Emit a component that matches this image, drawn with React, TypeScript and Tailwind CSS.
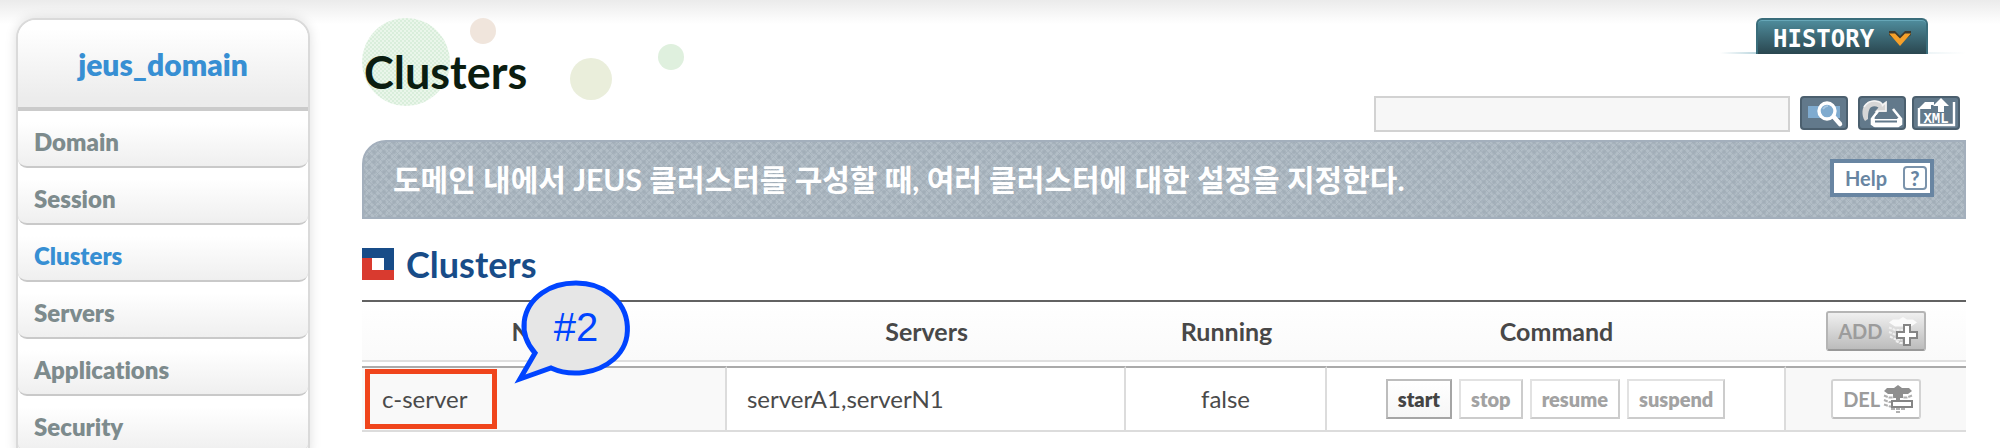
import React from "react";

const menu = ["Domain", "Session", "Clusters", "Servers", "Applications", "Security"];

const commands = [
  { label: "start", active: true },
  { label: "stop", active: false },
  { label: "resume", active: false },
  { label: "suspend", active: false },
];

function Sidebar() {
  return (
    <nav
      aria-label="Main"
      className="w-[294px] shrink-0 self-start overflow-hidden rounded-t-[20px] border-2 border-[#dadada] bg-white shadow-[0_0_12px_rgba(0,0,0,0.13)]"
    >
      <div className="flex h-[91px] items-center justify-center border-b-4 border-[#cbcbcb] bg-linear-to-b from-white from-10% to-[#ececec] to-90%">
        <a href="#domain" className="text-[30px] leading-none font-extrabold text-[#378fd3]">
          jeus_domain
        </a>
      </div>
      <ul>
        {menu.map((item) => (
          <li key={item}>
            <a
              href={"#" + item.toLowerCase()}
              className={
                "flex h-[57px] items-center rounded-b-[9px] border-b-2 border-[#c9c9c9] bg-linear-to-b from-white from-20% to-[#efefef] px-4 pt-1.5 text-[24px] leading-none font-extrabold " +
                (item === "Clusters" ? "text-[#378fd3]" : "text-[#7d8b8d]")
              }
            >
              {item}
            </a>
          </li>
        ))}
      </ul>
    </nav>
  );
}

function TitleDots() {
  return (
    <svg className="absolute top-0 left-0 h-[88px] w-[322px]" viewBox="0 0 322 88" aria-hidden="true">
      <defs>
        <pattern id="weave" width="4" height="4" patternUnits="userSpaceOnUse">
          <rect width="4" height="4" fill="#eaf6ea" />
          <rect width="2" height="2" fill="#d9eedb" />
          <rect x="2" y="2" width="2" height="2" fill="#d9eedb" />
        </pattern>
      </defs>
      <circle cx="44" cy="44" r="44" fill="url(#weave)" />
      <circle cx="121" cy="13" r="13" fill="#f0e5dc" />
      <circle cx="229" cy="61" r="21" fill="#eaeedb" />
      <circle cx="309" cy="39" r="13" fill="#dff0de" />
    </svg>
  );
}

function ToolButton({ label, children }: { label: string; children: React.ReactNode }) {
  return (
    <button
      type="button"
      aria-label={label}
      className="h-[34px] w-12 rounded-[4px] border-2 border-[#4b5f6e] bg-[#62798b]"
    >
      <svg viewBox="0 0 44 30" className="h-[30px] w-11" aria-hidden="true">
        {children}
      </svg>
    </button>
  );
}

function SearchRow() {
  return (
    <div className="flex items-start pr-1.5">
      <input
        type="text"
        aria-label="Search"
        className="mr-2.5 h-9 w-[416px] border-2 border-[#d2d2d2] bg-[#f7f7f7] px-2 text-[20px] outline-none"
      />
      <div className="mr-2.5 flex">
        <ToolButton label="Search">
          <rect x="6" y="8" width="32" height="12" fill="#7fabcf" />
          <path d="M31 18l7 8" stroke="#fff" strokeWidth="4.5" strokeLinecap="round" />
          <circle cx="25" cy="13" r="8" fill="#7fabcf" stroke="#fff" strokeWidth="3.4" />
          <path d="M21 11q2-3 5-3" fill="none" stroke="#a9c8e2" strokeWidth="1.6" />
        </ToolButton>
      </div>
      <div className="flex gap-1.5">
        <ToolButton label="Refresh">
          <path
            d="M5 23C1 17 2 9 6 5.500C11 1.500 18 1.500 22 6l4.500-3v11H14.500l4-4.500C15 7.500 11 8 9.500 11C8 14 8 18 8 21z"
            fill="#d6d6d6"
          />
          <path d="M4 9Q8 2.500 15 3t7.500 4.500L26 4.500V13h-9" fill="none" stroke="#f4f4f4" strokeWidth="1.600" />
          <path d="M18 13l-6 8v5l3 2h23l3-2v-5l-8-10" fill="none" stroke="#fff" strokeWidth="2.600" />
          <path d="M11 20h30v5l-3 4H14l-3-4z" fill="#fff" />
          <path d="M17 18h18l1 2H16zM15 23.500h22" fill="#62798b" stroke="#62798b" strokeWidth="2" />
        </ToolButton>
        <ToolButton label="Export XML">
          <path d="M5 10v17h35V4" fill="none" stroke="#fff" strokeWidth="2.400" />
          <path d="M4 11l7-7h9v3h-3v4H4z" fill="#fff" />
          <path d="M27 0l8 8h-5v6h-6V8h-5z" fill="#fff" />
          <text x="22" y="25" textAnchor="middle" fontFamily="Liberation Mono, monospace" fontWeight="700" fontSize="14" fill="#fff">
            XML
          </text>
        </ToolButton>
      </div>
    </div>
  );
}

function PageHeader() {
  return (
    <header className="flex h-[122px] justify-between">
      <div className="relative">
        <TitleDots />
        <h1 className="relative pt-7 pl-0.5 text-[45px] leading-[52px] font-bold text-[#0b1d10]">Clusters</h1>
      </div>
      <div className="flex flex-col items-end justify-between pb-2">
        <div className="flex w-[246px] flex-col items-end">
          <button
            type="button"
            className="z-10 mr-[38px] flex h-9 w-[172px] items-center rounded-t-[6px] border-2 border-b-0 border-[#3a6d7b] bg-linear-to-b from-[#4f8d9d] to-[#2a4750] pt-1 pl-[15px] shadow-[inset_0_1px_0_#67a7b8]"
          >
            <span className="font-['DejaVu_Sans_Mono',monospace] text-[24px] leading-none font-bold text-white">HISTORY</span>
            <svg viewBox="0 0 24 16" className="ml-3.5 h-4 w-6" aria-hidden="true">
              <path d="M1 0h6l5 5 5-5h6v4L12 13 1 4z" fill="#3b3a30" />
              <path d="M1 2.500h6l5 5 5-5h6L12 15z" fill="#f5a02a" />
            </svg>
          </button>
          <div className="-mt-0.5 h-0.5 w-full bg-linear-to-r from-transparent via-[#a5c9d4] via-20% to-transparent" />
        </div>
        <SearchRow />
      </div>
    </header>
  );
}

function Banner() {
  return (
    <section className="flex h-[79px] items-center justify-between rounded-tl-[24px] border-2 border-[#a3afbc] bg-[#b3bec7] bg-[radial-gradient(circle_at_center,#9fabb5_1px,transparent_3px),radial-gradient(circle_at_center,#a2aeb8_1px,transparent_3px),repeating-linear-gradient(45deg,rgba(150,163,174,0.35)_0_1px,transparent_1px_4px),repeating-linear-gradient(-45deg,rgba(150,163,174,0.35)_0_1px,transparent_1px_4px)] bg-[length:10px_10px,10px_10px,auto,auto] bg-[position:0_0,5px_5px,0_0,0_0] pr-[30px] pl-[29px]">
      <p className="pb-0.5 text-[30px] leading-none font-bold text-white">
        도메인 내에서 JEUS 클러스터를 구성할 때, 여러 클러스터에 대한 설정을 지정한다.
      </p>
      <button
        type="button"
        className="mb-1 flex h-[38px] w-[104px] items-center justify-between border-4 border-[#6885a2] bg-white pr-[3px] pl-[11px] text-[20px] leading-none font-bold text-[#6885a2]"
      >
        Help
        <span className="flex size-6 items-center justify-center rounded-[4px] border-2 border-[#7b93ab] text-[20px] leading-none font-black">
          ?
        </span>
      </button>
    </section>
  );
}

function LayersIcon({ kind }: { kind: "add" | "del" }) {
  if (kind === "add") {
    return (
      <svg viewBox="0 0 30 30" className="size-[30px]" aria-hidden="true">
        <path d="M15 1l4 2.500h6l4 3-6 4H7L1 6.500l4-3h6z" fill="#fafafa" />
        <path
          d="M1 11.500l6 2.500h8M1 16l7 3h6M2 20.500l6 3h6M8 25l4 2h4"
          fill="none"
          stroke="#f0f0f0"
          strokeWidth="2"
          strokeDasharray="3 1"
        />
        <path d="M16 9h6v7h7v6h-7v7h-6v-7H9v-6h7z" fill="#fff" stroke="#858585" strokeWidth="2" />
      </svg>
    );
  }
  return (
    <svg viewBox="0 0 30 30" className="size-[30px]" aria-hidden="true">
      <path d="M15 1l4 3h7l3 3-4 3h-5v4h-3v3h-4v-3h-3v-4H5L1 7l3-3h7z" fill="#8f8f8f" />
      <path
        d="M1 11.500l5 2h5M29 11.500l-5 2h-4M1 16l5 2h3M1 20.500l6 2h3M8 25h14M13 28h4"
        fill="none"
        stroke="#b0b0b0"
        strokeWidth="2"
        strokeDasharray="4 1"
      />
      <rect x="9" y="17" width="20" height="6" fill="#fff" stroke="#858585" strokeWidth="2" />
    </svg>
  );
}

function HeaderCell({ width, children }: { width: string; children: React.ReactNode }) {
  return (
    <th className={"border-t-2 border-[#626262] p-0 pb-1 " + width}>
      <div className="flex h-[60px] items-center justify-center border-b-2 border-[#dfdfdf] bg-linear-to-b from-white to-[#fafafa] text-[25px] leading-none font-bold text-[#484848]">
        {children}
      </div>
    </th>
  );
}

function ClusterTable() {
  const cell = "h-[66px] border-t-2 border-b-2 border-t-[#aaaaaa] border-b-[#dcdcdc] border-r-[#dcdcdc] ";
  return (
    <div className="relative">
      <table className="w-full table-fixed border-separate border-spacing-0 text-[24px] leading-none text-[#4a4a4a]">
        <thead>
          <tr>
            <HeaderCell width="w-[22.75%]">Name</HeaderCell>
            <HeaderCell width="w-[24.9%]">Servers</HeaderCell>
            <HeaderCell width="w-[12.5%]">Running</HeaderCell>
            <HeaderCell width="w-[28.65%]">Command</HeaderCell>
            <HeaderCell width="w-[11.2%]">
              <button
                type="button"
                className="flex h-10 w-[100px] items-center justify-between rounded-[3px] border-2 border-[#b5b5b5] border-b-[#999999] bg-linear-to-b from-[#f0f0f0] to-[#bcbcbc] pr-1.5 pl-2.5 text-[20px] leading-none font-bold text-[#9c9c9c]"
              >
                ADD
                <LayersIcon kind="add" />
              </button>
            </HeaderCell>
          </tr>
        </thead>
        <tbody>
          <tr>
            <td className={cell + "border-r-2 bg-[#f9f9f9] px-[3px] py-0"}>
              <a href="#c-server" className="flex h-[60px] w-[132px] items-center border-5 border-[#f0451c] pl-3">
                c-server
              </a>
            </td>
            <td className={cell + "border-r-2 px-5 py-0"}>serverA1,serverN1</td>
            <td className={cell + "border-r-2 p-0 text-center"}>false</td>
            <td className={cell + "border-r-2 p-0"}>
              <div className="flex justify-center gap-[7px]">
                {commands.map(({ label, active }) => (
                  <button
                    key={label}
                    type="button"
                    className={
                      "h-10 border-2 px-2.5 text-[20px] leading-none font-extrabold " +
                      (active
                        ? "border-[#bdbdbd] border-r-[#a5a5a5] border-b-[#a5a5a5] bg-linear-to-b from-white to-[#f6f6f6] text-[#444444]"
                        : "border-[#e2e2e2] border-r-[#cccccc] border-b-[#cccccc] bg-white text-[#a2a2a2]")
                    }
                  >
                    {label}
                  </button>
                ))}
              </div>
            </td>
            <td className={cell + "bg-[#f8f8f8] p-0"}>
              <button
                type="button"
                className="mx-auto flex h-10 w-[90px] items-center justify-between rounded-[3px] border-2 border-[#d3d3d3] border-b-[#bdbdbd] bg-white pr-1.5 pl-2.5 text-[20px] leading-none font-bold text-[#9c9c9c]"
              >
                DEL
                <LayersIcon kind="del" />
              </button>
            </td>
          </tr>
        </tbody>
      </table>
      <svg viewBox="0 0 124 110" className="absolute -top-[22px] left-[152px] h-[110px] w-[124px]" role="img" aria-label="#2">
        <path
          d="M21 75C4 56 7 30 28 15c18-13 50-14 68 1 22 17 23 48 4 65-17 15-43 18-63 9L6 101z"
          fill="#e6e6e6"
          stroke="#0044ff"
          strokeWidth="5"
          strokeMiterlimit="10"
        />
        <text x="62" y="63" textAnchor="middle" fontFamily="Liberation Sans, sans-serif" fontSize="40" fill="#0044ff">
          #2
        </text>
      </svg>
    </div>
  );
}

export default function App() {
  return (
    <div className="h-screen overflow-hidden bg-white bg-[linear-gradient(#ebebeb,#ffffff)] bg-[length:100%_24px] bg-no-repeat font-['Lato','Noto_Sans_CJK_KR',sans-serif] [font-variant-ligatures:none]">
      <div className="flex gap-[52px] pt-[18px] pr-[34px] pl-4">
        <Sidebar />
        <main className="min-w-0 flex-1">
          <PageHeader />
          <Banner />
          <div className="flex h-[81px] items-center gap-3 pt-2">
            <svg viewBox="0 0 32 32" className="size-8" aria-hidden="true">
              <rect width="32" height="32" fill="#d93a2f" />
              <path d="M0 0h32v22H22V10H0z" fill="#184c88" />
              <rect x="10" y="10" width="12" height="12" fill="#fff" />
            </svg>
            <h2 className="text-[36px] leading-none font-bold text-[#184c88]">Clusters</h2>
          </div>
          <ClusterTable />
        </main>
      </div>
    </div>
  );
}
